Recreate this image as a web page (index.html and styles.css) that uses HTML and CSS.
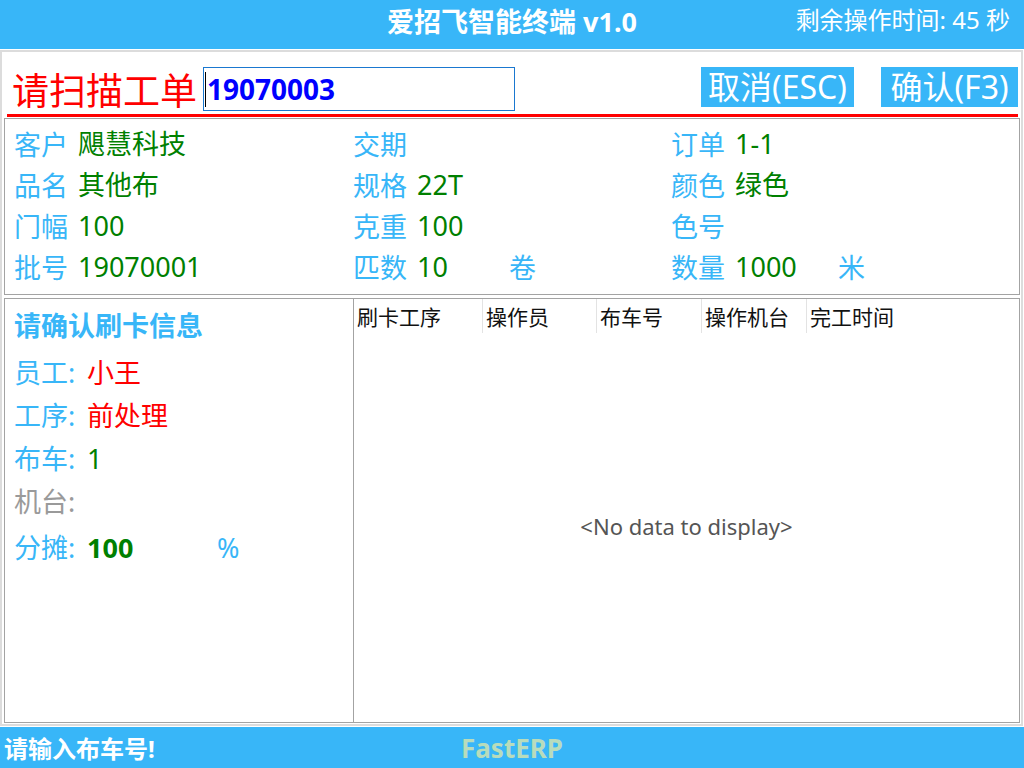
FILE: index.html
```html
<!DOCTYPE html>
<html lang="zh-CN">
<head>
<meta charset="utf-8">
<title>爱招飞智能终端</title>
<link rel="stylesheet" href="styles.css">
</head>
<body>
<div class="header">
  <div></div>
  <div class="title">爱招飞智能终端 v1.0</div>
  <div class="timer">剩余操作时间: 45 秒</div>
</div>
<div class="frame">
  <div class="scan">
    <span class="scan-label">请扫描工单</span>
    <div class="scan-input"><span class="caret"></span>19070003</div>
    <div class="btns">
      <span class="btn btn-cancel">取消(ESC)</span>
      <span class="btn btn-ok">确认(F3)</span>
    </div>
  </div>
  <div class="redline"></div>
  <div class="info">
    <div class="cell"><span class="lbl">客户</span><span class="val">飓慧科技</span></div>
    <div class="cell"><span class="lbl">交期</span></div>
    <div class="cell"><span class="lbl">订单</span><span class="val">1-1</span></div>

    <div class="cell"><span class="lbl">品名</span><span class="val">其他布</span></div>
    <div class="cell"><span class="lbl">规格</span><span class="val">22T</span></div>
    <div class="cell"><span class="lbl">颜色</span><span class="val">绿色</span></div>

    <div class="cell"><span class="lbl">门幅</span><span class="val">100</span></div>
    <div class="cell"><span class="lbl">克重</span><span class="val">100</span></div>
    <div class="cell"><span class="lbl">色号</span></div>

    <div class="cell"><span class="lbl">批号</span><span class="val">19070001</span></div>
    <div class="cell"><span class="lbl">匹数</span><span class="val val-pcs">10</span><span class="unit">卷</span></div>
    <div class="cell"><span class="lbl">数量</span><span class="val val-qty">1000</span><span class="unit">米</span></div>
  </div>
  <div class="bottom">
    <div class="card">
      <div class="card-title">请确认刷卡信息</div>
      <div class="row"><span class="k">员工:</span><span class="v red">小王</span></div>
      <div class="row"><span class="k">工序:</span><span class="v red">前处理</span></div>
      <div class="row"><span class="k">布车:</span><span class="v green">1</span></div>
      <div class="row"><span class="k gray">机台:</span></div>
      <div class="row row-last"><span class="k">分摊:</span><span class="v green bold pct">100</span><span class="k">%</span></div>
    </div>
    <div class="grid">
      <div class="grid-head">
        <div class="col c1">刷卡工序</div>
        <div class="col c2">操作员</div>
        <div class="col c3">布车号</div>
        <div class="col c4">操作机台</div>
        <div class="col c5">完工时间</div>
      </div>
      <div class="grid-body">&lt;No data to display&gt;</div>
    </div>
  </div>
</div>
<div class="footer">
  <div class="hint">请输入布车号!</div>
  <div class="brand">FastERP</div>
  <div></div>
</div>
</body>
</html>
```

FILE: styles.css
```css
* { box-sizing: border-box; }

html, body {
  margin: 0;
  padding: 0;
  width: 1024px;
  height: 768px;
  overflow: hidden;
  background: #ffffff;
  font-family: "Noto Sans", "Noto Sans CJK SC", sans-serif;
}

.header {
  height: 49px;
  background: #38b6f8;
  color: #ffffff;
  display: grid;
  grid-template-columns: 1fr auto 1fr;
  align-items: center;
}

.title {
  font-size: 27px;
  font-weight: 700;
  line-height: 40px;
  padding-bottom: 5px;
}

.timer {
  justify-self: end;
  font-size: 24px;
  line-height: 40px;
  padding-right: 14px;
  align-self: start;
}

.frame {
  margin-top: 1px;
  width: 1023px;
  height: 676px;
  border: 2px solid #dcdcdc;
  padding: 0 1px 1px 2px;
  display: flex;
  flex-direction: column;
}

.scan {
  height: 62px;
  display: flex;
  align-items: flex-start;
  padding: 15px 2px 0 8px;
}

.scan-label {
  font-family: "Noto Sans CJK SC", sans-serif;
  font-size: 37px;
  line-height: 44px;
  color: #ff0000;
}

.scan-input {
  margin-left: 6px;
  width: 312px;
  height: 44px;
  border: 1px solid #1a78d0;
  padding-left: 1px;
  display: flex;
  align-items: center;
  font-size: 28px;
  font-weight: 700;
  color: #0000ff;
  line-height: 42px;
}

.caret {
  display: inline-block;
  width: 1px;
  height: 35px;
  background: #000000;
  margin-right: 1px;
}

.btns {
  margin-left: auto;
  display: flex;
  gap: 27px;
}

.btn {
  height: 40px;
  background: #38b6f8;
  color: #ffffff;
  font-size: 32px;
  line-height: 40px;
  text-align: center;
  white-space: nowrap;
}

.btn-cancel { width: 153px; }
.btn-ok { width: 137px; }

.redline {
  height: 3px;
  background: #ff0000;
  margin: 0 2px 0 3px;
}

.info {
  margin-top: 1px;
  height: 177px;
  border: 1px solid #a3a3a3;
  padding: 4px 0 0 9px;
  display: grid;
  grid-template-columns: 339px 318px 1fr;
  grid-auto-rows: 41px;
  font-size: 27px;
  line-height: 41px;
}

.cell {
  display: flex;
  white-space: nowrap;
}

.lbl {
  color: #38b6f8;
  font-family: "Noto Sans CJK SC", sans-serif;
  margin-right: 10px;
}

.val {
  color: #008000;
}

.val-pcs { width: 92px; }
.val-qty { width: 103px; }

.unit {
  color: #38b6f8;
  font-family: "Noto Sans CJK SC", sans-serif;
}

.bottom {
  margin-top: 3px;
  flex: 1;
  border: 1px solid #a3a3a3;
  display: flex;
}

.card {
  width: 349px;
  border-right: 1px solid #a3a3a3;
  padding: 9px 0 0 9px;
}

.card-title {
  font-size: 27px;
  font-weight: 700;
  color: #38b6f8;
  line-height: 36px;
  margin-bottom: 7px;
}

.row {
  display: flex;
  font-size: 27px;
  line-height: 43px;
  white-space: nowrap;
}

.row-last { margin-top: 3px; }

.k {
  color: #38b6f8;
  width: 73px;
}

.k.gray { color: #9a9a9a; }

.red { color: #ff0000; }
.green { color: #008000; }
.bold { font-weight: 700; }
.pct { width: 130px; }

.grid {
  flex: 1;
  display: flex;
  flex-direction: column;
}

.grid-head {
  height: 34px;
  display: flex;
}

.col {
  font-family: "Noto Sans CJK SC", sans-serif;
  font-size: 21px;
  line-height: 34px;
  color: #111111;
  padding-left: 3px;
  border-right: 1px solid #e3e3e3;
  white-space: nowrap;
}

.c1 { width: 129px; }
.c2 { width: 114px; }
.c3 { width: 105px; }
.c4 { width: 105px; }
.c5 { flex: 1; border-right: none; }

.grid-body {
  flex: 1;
  display: flex;
  align-items: center;
  justify-content: center;
  font-size: 22px;
  color: #555555;
  padding-bottom: 4px;
}

.footer {
  margin-top: 1px;
  height: 41px;
  background: #38b6f8;
  display: grid;
  grid-template-columns: 1fr auto 1fr;
  align-items: center;
}

.hint {
  padding-left: 4px;
  font-size: 24px;
  font-weight: 700;
  color: #ffffff;
}

.brand {
  font-size: 26px;
  font-weight: 700;
  color: #b8dcbc;
}
```
